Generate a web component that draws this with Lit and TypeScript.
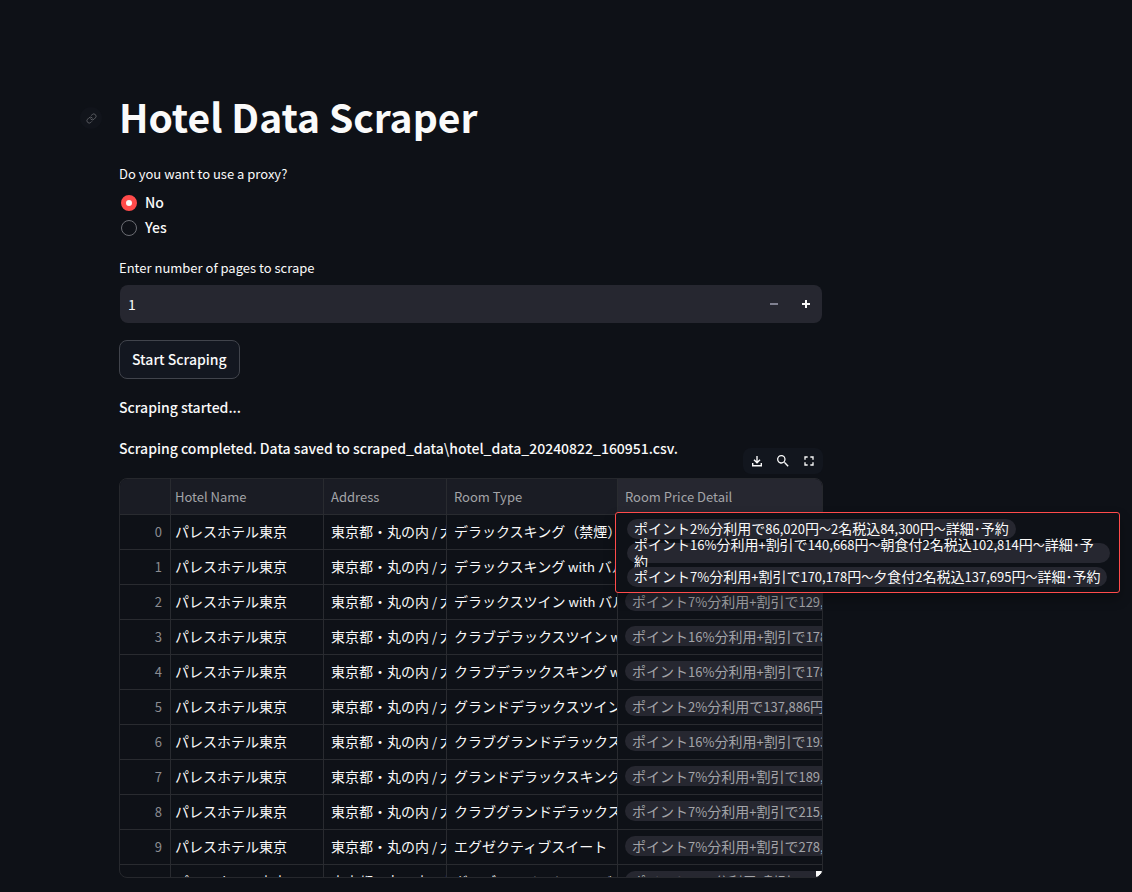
import { LitElement, html, css } from "lit";
import { customElement, state } from "lit/decorators.js";

interface Row {
  room: string;
  price: string;
}

const HOTEL = "パレスホテル東京";
const ADDRESS = "東京都・丸の内 / 大手町・八重洲";

const ROWS: Row[] = [
  { room: "デラックスキング（禁煙）", price: "ポイント2%分利用で86,020円～2名税込84,300円～詳細･予約" },
  { room: "デラックスキング with バルコニー", price: "ポイント7%分利用+割引で121,300円～詳細･予約" },
  { room: "デラックスツイン with バルコニー", price: "ポイント7%分利用+割引で129,400円～詳細･予約" },
  { room: "クラブデラックスツイン with バルコニー", price: "ポイント16%分利用+割引で178,500円～詳細･予約" },
  { room: "クラブデラックスキング with バルコニー", price: "ポイント16%分利用+割引で178,500円～詳細･予約" },
  { room: "グランドデラックスツイン", price: "ポイント2%分利用で137,886円～詳細･予約" },
  { room: "クラブグランドデラックスツイン", price: "ポイント16%分利用+割引で193,200円～詳細･予約" },
  { room: "グランドデラックスキング", price: "ポイント7%分利用+割引で189,400円～詳細･予約" },
  { room: "クラブグランドデラックスキング", price: "ポイント7%分利用+割引で215,700円～詳細･予約" },
  { room: "エグゼクティブスイート", price: "ポイント7%分利用+割引で278,300円～詳細･予約" },
  { room: "ガーデンスイート with バルコニー", price: "ポイント16%分利用+割引で312,600円～詳細･予約" },
];

const DETAILS = [
  "ポイント2%分利用で86,020円～2名税込84,300円～詳細･予約",
  "ポイント16%分利用+割引で140,668円～朝食付2名税込102,814円～詳細･予約",
  "ポイント7%分利用+割引で170,178円～夕食付2名税込137,695円～詳細･予約",
];

/** Sets Latin letters, digits and tildes a step smaller than the kana and kanji around them. */
const mixed = (text: string) =>
  text
    .split(/([\x20-\x7e]+|～)/)
    .filter((part) => part !== "")
    .map((part) => {
      if (part === "～") return html`<span class="tilde">${part}</span>`;
      return /^[\x20-\x7e]/.test(part) ? html`<span class="latin">${part}</span>` : part;
    });

@customElement("price-table")
export class PriceTable extends LitElement {
  static styles = css`
    :host {
      display: block;
      position: relative;
    }
    .toolbar {
      position: absolute;
      right: 0;
      bottom: 100%;
      margin-bottom: 4px;
      display: flex;
      gap: 10px;
      padding: 5px 6px;
      border-radius: 8px;
      background: #12161e;
    }
    .tool {
      display: block;
      width: 16px;
      height: 16px;
      padding: 0;
      border: 0;
      background: none;
      color: #fafafa;
    }
    .tool svg {
      display: block;
      width: 16px;
      height: 16px;
      fill: currentColor;
    }
    .frame {
      position: relative;
      height: 400px;
      box-sizing: border-box;
      overflow: hidden;
      border: 1px solid #26282d;
      border-radius: 8px;
    }
    .grid {
      width: 100%;
      table-layout: fixed;
      border-collapse: separate;
      border-spacing: 0;
      font-size: 14px;
      line-height: 20px;
    }
    .col-index { width: 51px; }
    .col-hotel { width: 153px; }
    .col-address { width: 123px; }
    .col-room { width: 171px; }
    th,
    td {
      box-sizing: border-box;
      height: 35px;
      padding: 0 0 2px 7px;
      overflow: hidden;
      white-space: nowrap;
      text-align: left;
      font-weight: 400;
      border-right: 1px solid #292b30;
      border-bottom: 1px solid #292b30;
    }
    th:last-child,
    td:last-child {
      border-right: 0;
    }
    th {
      height: 36px;
      padding-bottom: 0;
      font-size: 13px;
      color: #a3a4a8;
      background: #1a1c24;
    }
    th:last-child {
      background: #262730;
    }
    .hotel {
      padding-left: 4px;
    }
    .index {
      padding: 0 8px 0 0;
      text-align: right;
      font-size: 13px;
      color: #8b8c91;
    }
    .latin {
      font-size: 13px;
    }
    .tilde {
      font-size: 12px;
    }
    .chip {
      display: block;
      width: max-content;
      height: 20px;
      padding: 0 7px;
      border-radius: 10px;
      background: #262730;
      color: #a3a4a8;
    }
    .grip {
      position: absolute;
      right: 0;
      bottom: 0;
      width: 6px;
      height: 6px;
      background: linear-gradient(135deg, #fafafa 60%, transparent 60%);
    }
    .popup {
      position: absolute;
      left: 496px;
      top: 34px;
      width: 505px;
      box-sizing: border-box;
      display: flex;
      flex-direction: column;
      align-items: flex-start;
      gap: 4px;
      padding: 6px 9px 5px 11px;
      border: 1px solid #ff4b4b;
      border-radius: 3px;
      background: #0e1117;
      box-shadow: 0 6px 12px rgba(0, 0, 0, 0.3);
    }
    .pill {
      display: flex;
      align-items: center;
      height: 20px;
      box-sizing: border-box;
      padding: 0 7px 2px;
      border-radius: 10px;
      background: #262730;
      color: #fafafa;
      font-size: 14px;
      line-height: 16px;
    }
  `;

  render() {
    return html`
      <div class="toolbar">
        <button class="tool" aria-label="Download">
          <svg viewBox="0 0 16 16"><path d="M7.3 3h1.4v5l1.8-1.8 1 1L8 10.700 4.500 7.200l1-1L7.300 8zM3 10h1.400v2h7.200v-2H13v3.400H3z" /></svg>
        </button>
        <button class="tool" aria-label="Search">
          <svg viewBox="0 0 24 24"><path d="M15.500 14h-.8l-.3-.3a6.500 6.500 0 1 0-.7.7l.3.3v.8l5 5 1.500-1.500zm-6 0a4.500 4.500 0 1 1 0-9 4.500 4.500 0 0 1 0 9z" /></svg>
        </button>
        <button class="tool" aria-label="Fullscreen">
          <svg viewBox="0 0 24 24"><path d="M5 5h5v2H7v3H5zM14 5h5v5h-2V7h-3zM17 14h2v5h-5v-2h3zM5 14h2v3h3v2H5z" /></svg>
        </button>
      </div>
      <div class="frame">
        <table class="grid">
          <colgroup>
            <col class="col-index" />
            <col class="col-hotel" />
            <col class="col-address" />
            <col class="col-room" />
            <col />
          </colgroup>
          <thead>
            <tr>
              <th></th>
              <th class="hotel">Hotel Name</th>
              <th>Address</th>
              <th>Room Type</th>
              <th>Room Price Detail</th>
            </tr>
          </thead>
          <tbody>
            ${ROWS.map(
              (row, i) => html`<tr>
                <td class="index">${i}</td>
                <td class="hotel">${HOTEL}</td>
                <td>${mixed(ADDRESS)}</td>
                <td>${mixed(row.room)}</td>
                <td><span class="chip">${mixed(row.price)}</span></td>
              </tr>`
            )}
          </tbody>
        </table>
        <span class="grip"></span>
      </div>
      <div class="popup">
        ${DETAILS.map((text) => html`<div class="pill"><span>${mixed(text)}</span></div>`)}
      </div>
    `;
  }
}

@customElement("app-root")
export class AppRoot extends LitElement {
  static styles = css`
    :host {
      display: block;
      min-height: 100vh;
      box-sizing: border-box;
      padding: 87px 119px 14px;
      background: #0e1117;
      color: #fafafa;
      font-family: "Noto Sans CJK JP", sans-serif;
      font-size: 14px;
      line-height: 24px;
    }
    .page {
      max-width: 704px;
      display: flex;
      flex-direction: column;
      gap: 16px;
    }
    .title {
      position: relative;
      margin: 0 0 3px;
      font-size: 39px;
      font-weight: 700;
      line-height: 58px;
    }
    .anchor {
      position: absolute;
      right: 100%;
      top: 20px;
      margin-right: 17px;
      display: grid;
      place-items: center;
      width: 22px;
      height: 22px;
      border-radius: 11px;
      background: #11141b;
      color: #5e6066;
    }
    .anchor svg {
      width: 11px;
      height: 11px;
      fill: none;
      stroke: currentColor;
      stroke-width: 2;
      stroke-linecap: round;
      stroke-linejoin: round;
    }
    .field {
      margin: 0;
      padding: 0;
      border: 0;
      display: flex;
      flex-direction: column;
    }
    .choices {
      padding-bottom: 2px;
    }
    .label {
      padding: 0;
      margin-bottom: 6px;
      font-size: 13px;
      line-height: 20px;
    }
    .option {
      display: flex;
      align-items: center;
      gap: 8px;
      padding-left: 2px;
      font-weight: 500;
      line-height: 25px;
    }
    .radio {
      appearance: none;
      width: 16px;
      height: 16px;
      box-sizing: border-box;
      margin: 0;
      border: 1px solid #6b6d73;
      border-radius: 8px;
    }
    .radio:checked {
      border: 5px solid #ff4b4b;
      background: #fafafa;
    }
    .number {
      display: flex;
      height: 38px;
      margin: 1px;
      border-radius: 8px;
      background: #262730;
      overflow: hidden;
    }
    .value {
      flex: 1;
      min-width: 0;
      padding: 0 8px;
      border: 0;
      outline: 0;
      background: none;
      color: #fafafa;
      font: inherit;
    }
    .step {
      width: 32px;
      display: grid;
      place-items: center;
      padding: 0;
      border: 0;
      background: none;
      color: #fafafa;
    }
    .step:disabled {
      color: #808191;
    }
    .step svg {
      width: 8px;
      height: 8px;
      fill: currentColor;
    }
    .start {
      align-self: flex-start;
      height: 39px;
      padding: 0 12px 2px;
      border: 1px solid #41444c;
      border-radius: 8px;
      background: #131720;
      color: #fafafa;
      font: inherit;
      font-weight: 500;
    }
    .message {
      margin: 0;
      font-weight: 500;
      line-height: 25px;
    }
    .results {
      margin-top: 1px;
    }
  `;

  @state() private pages = 1;

  render() {
    return html`
      <main class="page">
        <h1 class="title">
          <a class="anchor" href="#hotel-data-scraper" aria-label="Link to heading">
            <svg viewBox="0 0 24 24">
              <path d="M10 13a5 5 0 0 0 7.540.540l3-3a5 5 0 0 0-7.070-7.070l-1.720 1.710M14 11a5 5 0 0 0-7.540-.540l-3 3a5 5 0 0 0 7.070 7.070l1.710-1.710" />
            </svg>
          </a>
          Hotel Data Scraper
        </h1>
        <fieldset class="field choices">
          <legend class="label">Do you want to use a proxy?</legend>
          <label class="option"><input class="radio" type="radio" name="proxy" checked />No</label>
          <label class="option"><input class="radio" type="radio" name="proxy" />Yes</label>
        </fieldset>
        <div class="field">
          <label class="label" for="pages">Enter number of pages to scrape</label>
          <div class="number">
            <input
              class="value"
              id="pages"
              type="text"
              inputmode="numeric"
              .value=${String(this.pages)}
              @change=${(e: Event) => (this.pages = Math.max(1, Number((e.target as HTMLInputElement).value) || 1))}
            />
            <button class="step" aria-label="Decrease" ?disabled=${this.pages <= 1} @click=${() => this.pages--}>
              <svg viewBox="0 0 8 8"><path d="M0 3h8v2H0z" /></svg>
            </button>
            <button class="step" aria-label="Increase" @click=${() => this.pages++}>
              <svg viewBox="0 0 8 8"><path d="M3 0h2v3h3v2H5v3H3V5H0V3h3z" /></svg>
            </button>
          </div>
        </div>
        <button class="start">Start Scraping</button>
        <p class="message">Scraping started...</p>
        <p class="message">Scraping completed. Data saved to scraped_data\\hotel_data_20240822_160951.csv.</p>
        <price-table class="results"></price-table>
      </main>
    `;
  }
}
